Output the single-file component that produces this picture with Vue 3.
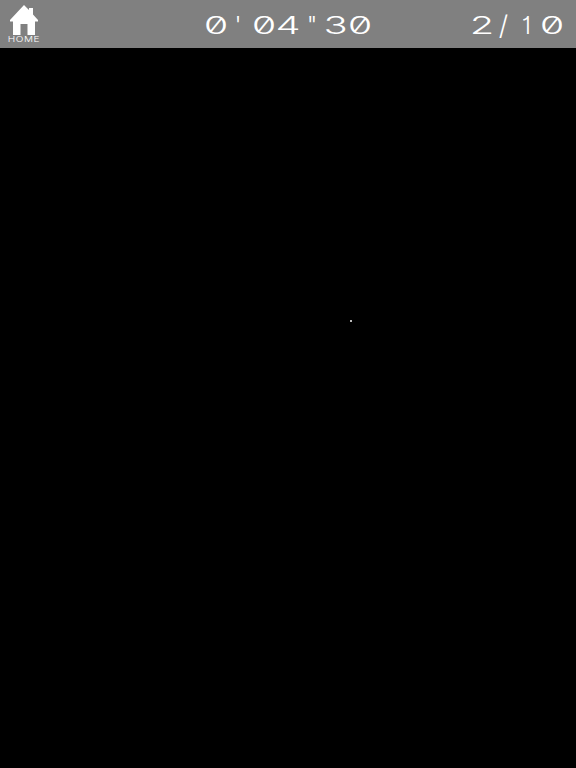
<template>
  <div class="game-screen">
    <header class="top-bar">
      <div class="home-btn">
        <svg class="home-icon" width="30" height="31" viewBox="0 0 30 31">
          <path fill="#fff" d="M15 0 L20 5 V3 H24 V9.500 L29 15 V16.500 H26 V30 H18.500 V19 H11.500 V30 H4 V16.500 H1 V15 Z" />
        </svg>
        <span class="home-label">HOME</span>
      </div>
      <div class="timer">
        <span v-for="(c, i) in timeChars" :key="i" class="cell" :class="c.cls">{{ c.ch }}</span>
      </div>
      <div class="progress">
        <span v-for="(c, i) in progressChars" :key="i" class="cell" :class="c.cls">{{ c.ch }}</span>
      </div>
    </header>
    <main class="field">
      <div class="star" :style="{ left: star.x + 'px', top: star.y + 'px' }"></div>
    </main>
  </div>
</template>

<script setup>
const timeChars = [
  { ch: '0', cls: 'digit' },
  { ch: "'", cls: 'mark tick' },
  { ch: '0', cls: 'digit' },
  { ch: '4', cls: 'digit' },
  { ch: '"', cls: 'mark' },
  { ch: '3', cls: 'digit' },
  { ch: '0', cls: 'digit' }
]

const progressChars = [
  { ch: '2', cls: 'digit' },
  { ch: '/', cls: 'slash' },
  { ch: '1', cls: 'one' },
  { ch: '0', cls: 'digit' }
]

// star position inside the black field
const star = { x: 350, y: 272 }
</script>

<style>
html,
body {
  margin: 0;
  background: #000;
}
</style>

<style scoped>
.game-screen {
  width: 576px;
  height: 768px;
  display: flex;
  flex-direction: column;
  background: #000;
  overflow: hidden;
}

.top-bar {
  height: 48px;
  flex: none;
  display: flex;
  align-items: flex-start;
  background: #808080;
  color: #fff;
  font-family: Inter, "Liberation Sans", sans-serif;
  font-feature-settings: "zero" 1, "tnum" 1;
}

.home-btn {
  width: 48px;
  display: flex;
  flex-direction: column;
  align-items: center;
  padding-top: 5px;
}

.home-icon {
  display: block;
  margin-bottom: -1px;
}

.home-label {
  font-size: 8px;
  line-height: 8px;
  font-weight: 300;
  letter-spacing: 0.5px;
  transform: scaleX(1.25);
}

.timer {
  display: flex;
  margin-left: 156px;
  margin-top: 10px;
  width: 170px;
}

.progress {
  display: flex;
  margin-left: 96px;
  margin-top: 10px;
}

.cell {
  display: block;
  font-size: 24px;
  line-height: 32px;
  font-weight: 300;
  text-align: center;
}

.digit {
  width: 24px;
  transform: scaleX(1.65);
}

.mark {
  width: 24px;
}

.tick {
  box-sizing: border-box;
  padding-right: 4px;
}

.slash {
  width: 19px;
  font-size: 27px;
}

.one {
  width: 27px;
  font-feature-settings: "zero" 1, "cv01" 1;
}

.field {
  position: relative;
  flex: 1;
}

.star {
  position: absolute;
  width: 2px;
  height: 2px;
  background: #bbb;
}
</style>
